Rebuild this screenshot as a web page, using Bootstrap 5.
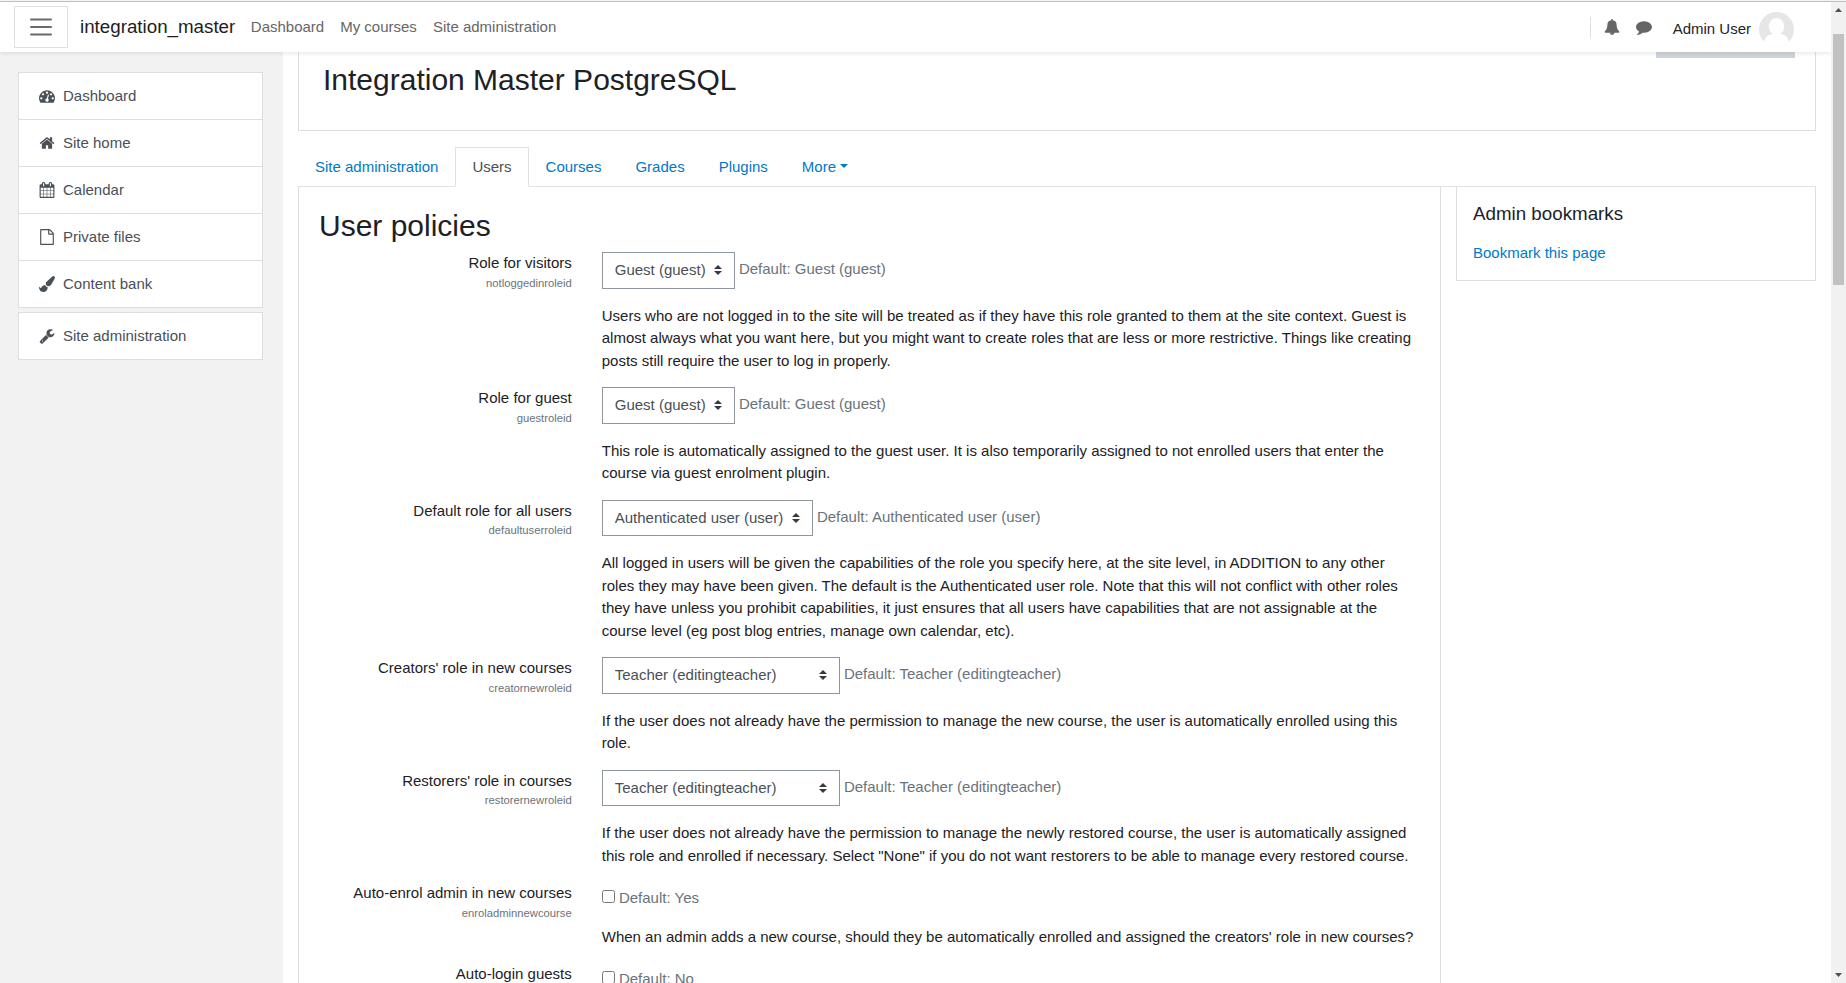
<!DOCTYPE html>
<html lang="en">
<head>
<meta charset="utf-8">
<meta name="viewport" content="width=device-width, initial-scale=1">
<title>User policies - integration_master</title>
<link href="https://cdn.jsdelivr.net/npm/bootstrap@5.3.0/dist/css/bootstrap.min.css" rel="stylesheet">
<style>
  :root { font-size: 15px; }
  body { font-family: "Liberation Sans", Arial, sans-serif; color: #1d2125; background: #fff; --bs-border-color: #dee2e6; }
  a { color: #0079c8; text-decoration: none; }
  h1, h2, h3 { font-weight: 400; }
  .window-edge { height: 2px; border-bottom: 1px solid #bdbebd; background: #f4f4f4; }
  .page-scroll { min-width: 0; overflow: hidden; }
  .topbar { height: 50px; padding: 0 37px 0 14px; background: #fff; box-shadow: 0 2px 4px rgba(0,0,0,.08); z-index: 2; }
  .drawer-toggle { width: 54px; height: 42px; border: 1px solid #dee2e6; border-radius: 0; color: #6a6a6a; }
  .topbar .navbar-brand { margin: 0 8px 0 12px; padding: 0; color: #1d1d1d; }
  .topbar .navbar-nav { gap: 1px; }
  .topbar .nav-link { padding: 8px; color: #666; }
  .topbar-tools { color: #666; gap: 16px; }
  .tool-rule { width: 1px; height: 21px; background: #dee2e6; margin-right: -3px; }
  .user-menu { color: #212529; gap: 8px; padding: 5px 0 0 5px; }
  .fa { width: 16px; height: 16px; fill: currentColor; flex: none; }
  .drawer { width: 283px; padding: 20px 20px 0 18px; background: #f2f2f2; }
  .drawer .list-group { --bs-list-group-border-radius: 0; margin-bottom: 4px; }
  .drawer .list-group-item { padding: 12px 20px; line-height: 22px; color: #495057; gap: 8px; border-color: #dcdfe2; }
  .main-region { padding: 0 15px; min-width: 0; }
  .course-head { height: 79px; padding: 0 20px 0 24px; border: 1px solid #dcdfe2; border-top: 0; margin-bottom: 16px; }
  .course-head h1 { font-size: 30px; line-height: 36px; margin: 10px 0 0; }
  .edit-edge { width: 139px; height: 6px; background: #ced4da; }
  .nav-tabs { --bs-nav-tabs-border-radius: 0; --bs-nav-tabs-link-active-color: #495057; }
  .nav-tabs .nav-link { padding: 8px 16px; line-height: 22px; color: #0079c8; }
  .nav-tabs .nav-link.active { color: #495057; }
  .policy-card { border: 1px solid #dcdfe2; border-top: 0; padding: 21px 20px 0; margin-right: 15px; min-width: 0; }
  .policy-card h2 { font-size: 30px; line-height: 36px; margin-bottom: 8px; }
  .policy-card .row { --bs-gutter-x: 30px; margin-bottom: 15px; }
  .setting-id { display: block; font-size: .75em; color: #6a737b; }
  .policy-card .form-select { display: inline-block; width: auto; padding: 6px 28px 6px 12px; border-radius: 0; border-color: #8f959e; color: #495057; font-size: 15px; vertical-align: middle;
    background-image: url("data:image/svg+xml,%3csvg xmlns='http://www.w3.org/2000/svg' viewBox='0 0 4 5'%3e%3cpath fill='%23343a40' d='M2 0L0 2h4zm0 5L0 3h4z'/%3e%3c/svg%3e");
    background-position: right 12px center; background-size: 8px 10px; }
  .default-info { color: #6a737b; }
  .tick-line { padding-top: 5px; }
  .tick-line input { width: 13px; height: 13px; margin: 0; }
  .setting-text { margin: 16px 0 0; }
  .blocks { width: 360px; flex: none; }
  .block-card { border: 1px solid #dcdfe2; border-top: 0; padding: 16px; }
  .block-card h3 { margin-bottom: 16px; }
  .page-scrollbar { width: 15px; padding: 6px 2px 6px; background: #f1f1f1; }
  .scroll-thumb { width: 11px; height: 251px; margin-top: 22px; background: #c1c1c1; }
  .page-scrollbar svg { width: 7px; height: 4px; flex: none; fill: #505050; }
</style>
</head>
<body class="vh-100 overflow-hidden d-flex flex-column">
<div class="window-edge flex-shrink-0"></div>
<div class="d-flex flex-grow-1 overflow-hidden">
  <div class="page-scroll d-flex flex-column flex-grow-1">
    <nav class="topbar navbar navbar-expand flex-nowrap flex-shrink-0 position-relative">
      <button class="drawer-toggle btn p-0 d-flex align-items-center justify-content-center" type="button" aria-label="Side panel">
        <svg width="24" height="20" viewBox="0 0 24 20" stroke="currentColor" stroke-width="2" stroke-linecap="round"><path d="M2 2.500h20M2 10h20M2 17.500h20"/></svg>
      </button>
      <a class="navbar-brand" href="#">integration_master</a>
      <ul class="navbar-nav me-auto">
        <li class="nav-item"><a class="nav-link" href="#">Dashboard</a></li>
        <li class="nav-item"><a class="nav-link" href="#">My courses</a></li>
        <li class="nav-item"><a class="nav-link" href="#">Site administration</a></li>
      </ul>
      <div class="topbar-tools d-flex align-items-center">
        <span class="tool-rule"></span>
        <a class="d-flex text-reset" href="#" aria-label="Notifications"><svg class="fa" viewBox="0 0 1792 1792"><path d="M912 1696q0-16-16-16-59 0-101.500-42.500t-42.500-101.500q0-16-16-16t-16 16q0 73 51.500 124.500t124.500 51.500q16 0 16-16zm816-288q0 52-38 90t-90 38h-448q0 106-75 181t-181 75-181-75-75-181h-448q-52 0-90-38t-38-90q50-42 91-88t85-119.500 74.500-158.500 50-206 19.500-260q0-152 117-282.500t307-158.500q-8-19-8-39 0-40 28-68t68-28 68 28 28 68q0 20-8 39 190 28 307 158.500t117 282.500q0 139 19.500 260t50 206 74.500 158.500 85 119.500 91 88z"/></svg></a>
        <a class="d-flex text-reset" href="#" aria-label="Messages"><svg class="fa" viewBox="0 0 1792 1792"><path d="M1792 896q0 174-120 321.500t-326 233-450 85.500q-70 0-145-8-198 175-460 242-49 14-114 22-17 2-30.500-9t-17.500-29v-1q-3-4-.5-12t2-10 4.500-9.500l6-9 7-8.500 8-9q7-8 31-34.500t34.500-38 31-39.500 32.500-51 27-59 26-76q-157-89-247.500-220t-90.500-281q0-130 71-248.500t191-204.500 286-136.500 348-50.500q244 0 450 85.500t326 233 120 321.500z"/></svg></a>
        <a class="user-menu d-flex align-items-center" href="#">Admin User
          <svg width="35" height="35" viewBox="0 0 35 35"><defs><clipPath id="disc"><circle cx="17.500" cy="17.500" r="17.500"/></clipPath></defs><g clip-path="url(#disc)"><rect width="35" height="35" fill="#e6e6e6"/><ellipse cx="17.500" cy="14.500" rx="7.700" ry="8.500" fill="#fff"/><path fill="#fff" d="M13 20h9v2c6 2 8 4 8.500 13h-26C5 26 7 24 13 22z"/></g></svg>
        </a>
      </div>
    </nav>
    <div class="d-flex flex-grow-1 overflow-hidden">
      <aside class="drawer flex-shrink-0">
        <div class="list-group">
          <a class="list-group-item d-flex align-items-center" href="#"><svg class="fa" viewBox="0 0 1792 1792"><path d="M384 1152q0-53-37.500-90.500t-90.500-37.500-90.500 37.500-37.500 90.500 37.500 90.500 90.500 37.500 90.500-37.500 37.500-90.500zm192-448q0-53-37.500-90.500t-90.500-37.500-90.500 37.500-37.500 90.500 37.500 90.500 90.500 37.500 90.500-37.500 37.500-90.500zm428 481l101-382q6-26-7.500-48.500t-38.500-29.500-48 6.500-30 39.500l-101 382q-60 5-107 43.500t-63 98.500q-20 77 20 146t117 89 146-20 89-117q16-60-6-117t-72-91zm660-33q0-53-37.500-90.500t-90.500-37.500-90.500 37.500-37.500 90.500 37.500 90.500 90.500 37.500 90.500-37.500 37.500-90.500zm-640-640q0-53-37.500-90.500t-90.500-37.500-90.500 37.500-37.500 90.500 37.500 90.500 90.500 37.500 90.500-37.500 37.500-90.500zm448 192q0-53-37.500-90.500t-90.500-37.500-90.500 37.500-37.500 90.500 37.500 90.500 90.500 37.500 90.500-37.500 37.500-90.500zm320 448q0 261-141 483-19 29-54 29h-1402q-35 0-54-29-141-221-141-483 0-182 71-348t191-286 286-191 348-71 348 71 286 191 191 286 71 348z"/></svg>Dashboard</a>
          <a class="list-group-item d-flex align-items-center" href="#"><svg class="fa" viewBox="0 0 1792 1792"><path d="M1472 992v480q0 26-19 45t-45 19h-384v-384h-256v384h-384q-26 0-45-19t-19-45v-480q0-1 .5-3t.5-3l575-474 575 474q1 2 1 6zm223-69l-62 74q-8 9-21 11h-3q-13 0-21-7l-692-577-692 577q-12 8-24 7-13-2-21-11l-62-74q-8-10-7-23.500t11-21.500l719-599q32-26 76-26t76 26l244 204v-195q0-14 9-23t23-9h192q14 0 23 9t9 23v408l219 182q10 8 11 21.500t-7 23.500z"/></svg>Site home</a>
          <a class="list-group-item d-flex align-items-center" href="#"><svg class="fa" viewBox="0 0 1792 1792"><path d="M192 1664h288v-288h-288v288zm352 0h320v-288h-320v288zm-352-352h288v-320h-288v320zm352 0h320v-320h-320v320zm-352-384h288v-288h-288v288zm736 736h320v-288h-320v288zm-384-736h320v-288h-320v288zm768 736h288v-288h-288v288zm-384-352h320v-320h-320v320zm-352-864v-288q0-13-9.500-22.500t-22.500-9.500h-64q-13 0-22.500 9.500t-9.500 22.500v288q0 13 9.500 22.500t22.500 9.500h64q13 0 22.500-9.500t9.500-22.500zm736 864h288v-320h-288v320zm-384-384h320v-288h-320v288zm384 0h288v-288h-288v288zm32-480v-288q0-13-9.500-22.500t-22.500-9.500h-64q-13 0-22.500 9.500t-9.500 22.500v288q0 13 9.500 22.500t22.500 9.500h64q13 0 22.500-9.500t9.500-22.500zm384-64v1280q0 52-38 90t-90 38h-1408q-52 0-90-38t-38-90v-1280q0-52 38-90t90-38h128v-96q0-66 47-113t113-47h64q66 0 113 47t47 113v96h384v-96q0-66 47-113t113-47h64q66 0 113 47t47 113v96h128q52 0 90 38t38 90z"/></svg>Calendar</a>
          <a class="list-group-item d-flex align-items-center" href="#"><svg class="fa" viewBox="0 0 1792 1792"><path d="M1596 380q28 28 48 76t20 88v1152q0 40-28 68t-68 28h-1344q-40 0-68-28t-28-68v-1600q0-40 28-68t68-28h896q40 0 88 20t76 48zm-444-244v376h376q-10-29-22-41l-313-313q-12-12-41-22zm384 1528v-1024h-416q-40 0-68-28t-28-68v-416h-768v1536h1280z"/></svg>Private files</a>
          <a class="list-group-item d-flex align-items-center" href="#"><svg class="fa" viewBox="0 0 1792 1792"><path d="M1615 0q70 0 122.500 46.500t52.500 116.500q0 63-45 151-332 629-465 752-97 91-218 91-126 0-216.500-92.500t-90.500-219.500q0-128 92-212l638-579q59-54 130-54zm-909 1034q39 76 106.500 130t150.500 76l1 71q4 213-129.500 347t-348.500 134q-123 0-218-46.500t-152.500-127.500-86.500-183-29-220q7 5 41 30t62 44.500 59 36.500 46 17q41 0 55-37 25-66 57.500-112.500t69.500-76 88-47.500 103-25.500 125-10.500z"/></svg>Content bank</a>
        </div>
        <div class="list-group">
          <a class="list-group-item d-flex align-items-center" href="#"><svg class="fa" viewBox="0 0 1792 1792"><path d="M448 1472q0-26-19-45t-45-19-45 19-19 45 19 45 45 19 45-19 19-45zm644-420l-682 682q-37 37-90 37-52 0-91-37l-106-108q-38-36-38-90 0-53 38-91l681-681q39 98 114.500 173.500t173.500 114.500zm634-435q0 39-23 106-47 134-164.500 217.500t-258.500 83.500q-185 0-316.500-131.500t-131.500-316.500 131.500-316.500 316.500-131.500q58 0 121.500 16.500t107.500 46.500q16 11 16 28t-16 28l-293 169v224l193 107q5-3 79-48.500t135.500-81 70.500-35.500q15 0 23.500 10t8.500 25z"/></svg>Site administration</a>
        </div>
      </aside>
      <main class="main-region flex-grow-1">
        <header class="course-head d-flex justify-content-between align-items-start">
          <h1>Integration Master PostgreSQL</h1>
          <div class="edit-edge"></div>
        </header>
        <ul class="nav nav-tabs">
          <li class="nav-item"><a class="nav-link" href="#">Site administration</a></li>
          <li class="nav-item"><a class="nav-link active" aria-current="page" href="#">Users</a></li>
          <li class="nav-item"><a class="nav-link" href="#">Courses</a></li>
          <li class="nav-item"><a class="nav-link" href="#">Grades</a></li>
          <li class="nav-item"><a class="nav-link" href="#">Plugins</a></li>
          <li class="nav-item dropdown"><a class="nav-link dropdown-toggle" data-bs-toggle="dropdown" href="#">More</a></li>
        </ul>
        <div class="d-flex align-items-start">
          <form class="policy-card flex-grow-1">
            <h2>User policies</h2>
            <div class="row">
              <div class="col-3 text-end"><label for="visitors">Role for visitors</label><span class="setting-id">notloggedinroleid</span></div>
              <div class="col-9">
                <select class="form-select" id="visitors"><option>Guest (guest)</option></select>
                <span class="default-info">Default: Guest (guest)</span>
                <p class="setting-text">Users who are not logged in to the site will be treated as if they have this role granted to them at the site context. Guest is almost always what you want here, but you might want to create roles that are less or more restrictive. Things like creating posts still require the user to log in properly.</p>
              </div>
            </div>
            <div class="row">
              <div class="col-3 text-end"><label for="guest">Role for guest</label><span class="setting-id">guestroleid</span></div>
              <div class="col-9">
                <select class="form-select" id="guest"><option>Guest (guest)</option></select>
                <span class="default-info">Default: Guest (guest)</span>
                <p class="setting-text">This role is automatically assigned to the guest user. It is also temporarily assigned to not enrolled users that enter the course via guest enrolment plugin.</p>
              </div>
            </div>
            <div class="row">
              <div class="col-3 text-end"><label for="allusers">Default role for all users</label><span class="setting-id">defaultuserroleid</span></div>
              <div class="col-9">
                <select class="form-select" id="allusers"><option>Authenticated user (user)</option></select>
                <span class="default-info">Default: Authenticated user (user)</span>
                <p class="setting-text">All logged in users will be given the capabilities of the role you specify here, at the site level, in ADDITION to any other roles they may have been given. The default is the Authenticated user role. Note that this will not conflict with other roles they have unless you prohibit capabilities, it just ensures that all users have capabilities that are not assignable at the course level (eg post blog entries, manage own calendar, etc).</p>
              </div>
            </div>
            <div class="row">
              <div class="col-3 text-end"><label for="creators">Creators' role in new courses</label><span class="setting-id">creatornewroleid</span></div>
              <div class="col-9">
                <select class="form-select" id="creators"><option>Teacher (editingteacher)</option><option>Non-editing teacher (teacher)</option></select>
                <span class="default-info">Default: Teacher (editingteacher)</span>
                <p class="setting-text">If the user does not already have the permission to manage the new course, the user is automatically enrolled using this role.</p>
              </div>
            </div>
            <div class="row">
              <div class="col-3 text-end"><label for="restorers">Restorers' role in courses</label><span class="setting-id">restorernewroleid</span></div>
              <div class="col-9">
                <select class="form-select" id="restorers"><option>Teacher (editingteacher)</option><option>Non-editing teacher (teacher)</option></select>
                <span class="default-info">Default: Teacher (editingteacher)</span>
                <p class="setting-text">If the user does not already have the permission to manage the newly restored course, the user is automatically assigned this role and enrolled if necessary. Select "None" if you do not want restorers to be able to manage every restored course.</p>
              </div>
            </div>
            <div class="row">
              <div class="col-3 text-end"><label for="autoenrol">Auto-enrol admin in new courses</label><span class="setting-id">enroladminnewcourse</span></div>
              <div class="col-9">
                <div class="tick-line"><input type="checkbox" id="autoenrol"> <span class="default-info">Default: Yes</span></div>
                <p class="setting-text">When an admin adds a new course, should they be automatically enrolled and assigned the creators' role in new courses?</p>
              </div>
            </div>
            <div class="row">
              <div class="col-3 text-end"><label for="autologin">Auto-login guests</label></div>
              <div class="col-9">
                <div class="tick-line"><input type="checkbox" id="autologin"> <span class="default-info">Default: No</span></div>
              </div>
            </div>
          </form>
          <aside class="blocks">
            <section class="block-card">
              <h3 class="h5">Admin bookmarks</h3>
              <a href="#">Bookmark this page</a>
            </section>
          </aside>
        </div>
      </main>
    </div>
  </div>
  <div class="page-scrollbar d-flex flex-column align-items-center justify-content-between flex-shrink-0">
    <div class="d-flex flex-column align-items-center">
      <svg viewBox="0 0 7 4"><path d="M0 4L3.500 0 7 4z"/></svg>
      <div class="scroll-thumb"></div>
    </div>
    <svg viewBox="0 0 7 4"><path d="M0 0h7L3.500 4z"/></svg>
  </div>
</div>
<script src="https://cdn.jsdelivr.net/npm/bootstrap@5.3.0/dist/js/bootstrap.bundle.min.js"></script>
</body>
</html>
